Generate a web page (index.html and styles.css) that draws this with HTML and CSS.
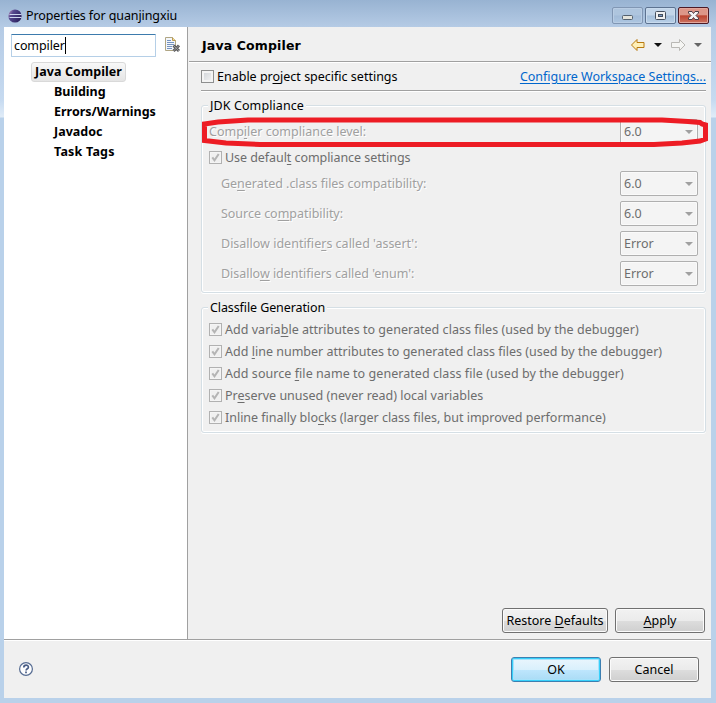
FILE: index.html
```html
<!DOCTYPE html>
<html lang="en">
<head>
<meta charset="utf-8">
<title>Properties for quanjingxiu</title>
<link rel="stylesheet" href="styles.css">
</head>
<body>
<svg width="0" height="0" class="defs">
  <symbol id="tick" viewBox="0 0 13 13"><path d="M3.300 6.300 L5.500 9.300 L9.700 3" fill="none" stroke="#b4b4b4" stroke-width="2"/></symbol>
</svg>
<div class="window">
  <header class="titlebar">
    <svg class="logo" width="14" height="14" viewBox="0 0 14 14"><defs><linearGradient id="lg" x1="0" y1="0" x2="1" y2=".6"><stop offset="0" stop-color="#c99fc4"/><stop offset=".35" stop-color="#55488f"/><stop offset="1" stop-color="#2c2260"/></linearGradient></defs><circle cx="7" cy="7" r="6.600" fill="url(#lg)"/><path d="M1.500 5.500h12M1.500 8.500h12" stroke="#cdd5f0" stroke-width="1"/></svg>
    <h1 class="title">Properties for quanjingxiu</h1>
    <div class="controls">
      <span class="ctl ctl-min"><svg width="31" height="17" viewBox="0 0 31 17"><rect x="10.500" y="8.500" width="10" height="4" rx="1" fill="#e4e4dc" stroke="#53606e"/></svg></span>
      <span class="ctl ctl-max"><svg width="31" height="17" viewBox="0 0 31 17"><rect x="10.500" y="4.500" width="10" height="8" rx="1" fill="#f1f1f1" stroke="#46505e"/><rect x="13.500" y="7.500" width="4" height="2" fill="#7898c0" stroke="#46505e"/></svg></span>
      <span class="ctl ctl-close"><svg width="31" height="17" viewBox="0 0 31 17"><path d="M10.500 4.500h3.500l1.500 2 1.500-2h3.500v1.500l-2.500 2.500 2.500 2.500v1.500h-3.500l-1.500-2-1.500 2h-3.500v-1.500l2.500-2.500-2.500-2.500z" fill="#f4f4f4" stroke="#4b3d46"/></svg></span>
    </div>
  </header>
  <main class="client">
    <div class="body">
      <aside class="sidebar">
        <div class="search">
          <div class="field">compiler<i class="caret"></i></div>
          <svg class="clear" width="17" height="17" viewBox="0 0 17 17"><path d="M1.500 1.500h7l3 3v10h-10z" fill="#f3f6fb" stroke="#b0a684"/><path d="M8.500 1.500v3h3" fill="#f6dc94" stroke="#b99a54"/><path d="M3 4.500h4M3 6.500h7M3 8.500h7M3 10.500h5M3 12.500h5" stroke="#7593bf"/><path d="M9.500 9.500l5.500 5.500M15 9.500l-5.500 5.500" stroke="#59595c" stroke-width="3"/><path d="M9.500 9.500l5.500 5.500M15 9.500l-5.500 5.500" stroke="#a5a5a5" stroke-width=".8"/></svg>
        </div>
        <ul class="tree">
          <li><span class="selected">Java Compiler</span></li>
          <li class="child">Building</li>
          <li class="child">Errors/Warnings</li>
          <li class="child">Javadoc</li>
          <li class="child t-task">Task Tags</li>
        </ul>
      </aside>
      <section class="page">
        <div class="pagehead">
          <h2>Java Compiler</h2>
          <svg width="76" height="14" viewBox="0 0 76 14"><path d="M1.500 7l5.500-5.500v3h7v5h-7v3z" fill="#fff0b8" stroke="#b87a10" stroke-linejoin="round"/><path d="M24 5h8l-4 4z" fill="#111"/><path d="M55 7l-5.500-5.500v3h-8v5h8v3z" fill="#f5f5f3" stroke="#b9b8b4" stroke-linejoin="round"/><path d="M64 5h8l-4 4z" fill="#666"/></svg>
        </div>
        <div class="content">
          <div class="enable">
            <span class="check on"></span><span>Enable pr<u>o</u>ject specific settings</span>
            <a class="link">Configure Workspace Settings...</a>
          </div>
          <section class="group jdk">
            <h3 class="legend w-jdk">JDK Compliance</h3>
            <div class="row first"><span class="lbl">Comp<u>i</u>ler compliance level:</span><span class="combo">6.0</span></div>
            <div class="option"><span class="check"><svg><use href="#tick"/></svg></span><span class="w-use">Use defaul<u>t</u> compliance settings</span></div>
            <div class="row"><span class="lbl w-l2">Ge<u>n</u>erated .class files compatibility:</span><span class="combo">6.0</span></div>
            <div class="row"><span class="lbl w-l2">Source co<u>m</u>patibility:</span><span class="combo">6.0</span></div>
            <div class="row"><span class="lbl">Disallow identifie<u>r</u>s called 'assert':</span><span class="combo">Error</span></div>
            <div class="row"><span class="lbl w-l2">Disallo<u>w</u> identifiers called 'enum':</span><span class="combo">Error</span></div>
            <svg class="mark" width="508" height="32" viewBox="0 0 508 32"><path d="M2.500 8 L16 6 L46 4 H460 L486 5.500 L498 6.500 L500 8 L503.500 9 V23 L498 25 L480 27 L452 28.500 H58 L24 27 L2.500 24.500 Z" fill="none" stroke="#ed1c24" stroke-width="5"/></svg>
          </section>
          <section class="group classfile">
            <h3 class="legend w-class">Classfile Generation</h3>
            <div class="option"><span class="check"><svg><use href="#tick"/></svg></span><span class="w-o1">Add varia<u>b</u>le attributes to generated class files (used by the debugger)</span></div>
            <div class="option"><span class="check"><svg><use href="#tick"/></svg></span><span class="w-o2">Add <u>l</u>ine number attributes to generated class files (used by the debugger)</span></div>
            <div class="option"><span class="check"><svg><use href="#tick"/></svg></span><span class="w-o3">Add source <u>f</u>ile name to generated class file (used by the debugger)</span></div>
            <div class="option"><span class="check"><svg><use href="#tick"/></svg></span><span>Pr<u>e</u>serve unused (never read) local variables</span></div>
            <div class="option"><span class="check"><svg><use href="#tick"/></svg></span><span class="w-o5">Inline finally blo<u>c</u>ks (larger class files, but improved performance)</span></div>
          </section>
          <div class="actions">
            <button class="btn wide">Restore <u>D</u>efaults</button>
            <button class="btn"><u>A</u>pply</button>
          </div>
        </div>
      </section>
    </div>
    <footer class="footer">
      <svg class="help" width="16" height="16" viewBox="0 0 16 16"><circle cx="8" cy="8" r="6.400" fill="#fdfdfe" stroke="#566c92" stroke-width="1.200"/><path d="M5.800 6.500c0-3 4.600-3 4.600-.3 0 1.500-2.300 1.700-2.300 3.300M8 10.500v1.700" fill="none" stroke="#485c85" stroke-width="1.700"/></svg>
      <div class="pair"><button class="btn default">OK</button><button class="btn">Cancel</button></div>
    </footer>
  </main>
</div>
</body>
</html>
```
FILE: styles.css
```css
* { box-sizing: border-box; }
body { margin: 0; font: 12.5px/20px "Noto Sans", sans-serif; color: #000; }
h1, h2, h3, ul { margin: 0; padding: 0; font-size: inherit; font-weight: normal; list-style: none; }
svg { display: block; flex: none; }
.defs { display: none; }
.window { width: 716px; height: 703px; padding: 0 5px 5px 4px; background: linear-gradient(180deg, #98b3d2 0, #b5cbe5 27px, #c6daf0 100px, #e0ecf8 117px, #b9d1ea 118px); display: flex; flex-direction: column; }
.titlebar { height: 27px; flex: none; display: flex; align-items: center; padding: 4px 2px 0 4px; }
.title { margin-left: 4px; }
.controls { margin-left: auto; margin-top: -1px; display: flex; gap: 2px; }
.ctl { width: 31px; height: 17px; border: 1px solid #7188a6; border-radius: 2px; box-shadow: inset 0 0 0 1px #c9dbee; background: linear-gradient(#c2d5e9 48%, #a5bfda 52%, #b9d0e8); }
.ctl svg { margin: -1px; }
.ctl-min { border-color: #8197b4; box-shadow: inset 0 0 0 1px #b9cde4; background: linear-gradient(#aec5de 48%, #a2bbd8 52%, #adc6e1); }
.ctl-max { border-color: #5d7391; }
.ctl-close { border-color: #4d1a25; box-shadow: inset 0 0 0 1px #e3a69b; background: linear-gradient(#dd9688 46%, #bc4430 52%, #cc7361); }
.title { letter-spacing: -.1px; }
.client { flex: 1; background: #f0f0f0; display: flex; flex-direction: column; }
.body { height: 613px; display: flex; border-bottom: 1px solid #a0a0a0; box-shadow: 0 1px #fff; }
.sidebar { width: 184px; background: #fff; border-right: 1px solid #a0a0a0; padding: 7px 0 7px 7px; }
.search { display: flex; }
.field { flex: none; width: 145px; height: 23px; border: 1px solid #b5cfe7; border-top-color: #3d7bad; border-radius: 1px; padding-left: 2px; line-height: 21px; display: flex; align-items: center; letter-spacing: -.1px; }
.caret { width: 1px; height: 17px; background: #000; }
.clear { margin: 2px 0 0 8px; }
.tree { padding: 5px 0 0 20px; font-weight: bold; }
.tree li { height: 20px; line-height: 20px; }
.selected { display: inline-block; height: 20px; line-height: 18px; padding: 0 3px; border: 1px solid #d9d9d9; border-radius: 3px; background: linear-gradient(#f8f8f8, #e5e5e5); letter-spacing: .08px; }
.tree .child { padding-left: 23px; }
.tree .t-task { letter-spacing: .2px; }
.page { flex: 1; margin-left: 1px; display: flex; flex-direction: column; }
.pagehead { height: 35px; border-bottom: 1px solid #a0a0a0; box-shadow: 0 1px #fff; display: flex; justify-content: space-between; align-items: center; padding: 2px 5px 0 13px; }
h2 { font: bold 12.5px "DejaVu Sans", sans-serif; letter-spacing: .15px; }
.content { flex: 1; display: flex; flex-direction: column; padding: 0 5px 6px 12px; }
.enable { height: 29px; padding-top: 2px; border-bottom: 1px solid #a0a0a0; box-shadow: 0 1px #fff; display: flex; align-items: center; }
.link { margin-left: auto; color: #0066cc; text-decoration: underline; text-underline-offset: 2px; letter-spacing: -.02px; }
u { text-underline-offset: 2px; }
.check { width: 13px; height: 13px; margin-right: 3px; border: 1px solid #b1b1b1; box-shadow: inset 0 0 0 1px #f4f4f4; background: #f0f0f0; flex: none; }
.check svg { width: 13px; height: 13px; margin: -1px; }
.check.on { margin-bottom: 1px; border-color: #8e8f8f; background: linear-gradient(135deg, #cdd1d6, #f6f6f6); box-shadow: inset 0 0 0 2px #f4f4f4; }
.group { position: relative; border: 1px solid #d5dfe5; border-radius: 3px; box-shadow: inset 0 0 0 1px #fff, 0 1px #fff; }
.jdk { margin-top: 14px; height: 188px; padding-left: 7px; padding-right: 7px; }
.classfile { margin-top: 14px; height: 126px; padding-left: 7px; }
.legend { width: max-content; height: 14px; line-height: 14px; margin: -7px 0 0 -1px; padding: 0 2px; background: #f0f0f0; }
.row { height: 30px; display: flex; justify-content: space-between; align-items: center; padding-left: 12px; }
.row.first { padding-left: 0; height: 26px; margin-top: 6px; }
.lbl { color: #a0a0a0; text-shadow: 1px 1px #fff; }
.combo { position: relative; width: 78px; height: 25px; border: 1px solid #afafaf; border-radius: 2px; box-shadow: inset 0 0 0 1px #fafafa; background: #f4f4f4; color: #6d6d6d; line-height: 23px; padding-left: 3px; }
.row .combo { margin-bottom: 1px; }
.combo::after { content: ""; position: absolute; right: 4px; top: 10px; border: 4px solid transparent; border-top-color: #a0a0a0; border-bottom: 0; }
.option { height: 22px; display: flex; align-items: center; color: #6d6d6d; white-space: nowrap; }
.option .check { margin-bottom: 1px; }
.jdk .option { height: 23px; margin-bottom: 1px; padding-top: 3px; }
.classfile .legend { margin-bottom: 4px; }
.w-jdk { letter-spacing: .1px; }
.w-class { letter-spacing: -.1px; }
.w-use { letter-spacing: -.06px; }
.w-l2 { letter-spacing: -.03px; }
.w-o1 { letter-spacing: .03px; }
.w-o2 { letter-spacing: .01px; }
.w-o3 { letter-spacing: .055px; }
.w-o5 { letter-spacing: -.015px; }
.mark { position: absolute; left: 0; top: 10px; }
.actions { margin-top: auto; display: flex; justify-content: flex-end; gap: 7px; padding-right: 1px; }
.btn { width: 90px; height: 25px; padding: 0; font: inherit; color: #000; border: 1px solid #707070; border-radius: 3px; box-shadow: inset 0 0 0 1px #fbfbfb; background: linear-gradient(#f2f2f2, #ebebeb 50%, #dddddd 51%, #cfcfcf); }
.btn.wide { width: 106px; }
.btn.default { border-color: #3c7fb1; box-shadow: inset 0 0 0 1px #37d0fa, inset 0 0 0 2px #a8e2fb; background: linear-gradient(#eaf6fd, #d9f0fc 50%, #bee6fd 51%, #a9dbf5); }
.footer { flex: 1; display: flex; justify-content: space-between; align-items: center; padding: 1px 12px 0 14px; }
.help { margin-bottom: 2px; }
.pair { display: flex; gap: 8px; }
```
